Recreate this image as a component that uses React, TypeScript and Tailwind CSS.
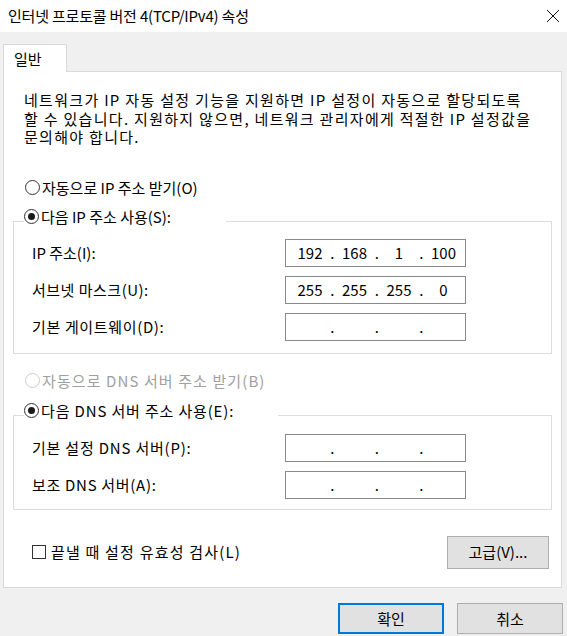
import React from 'react';

const FONT = { fontFamily: '"Noto Sans CJK KR", "Noto Sans", sans-serif' };

// Radio bullet, optionally checked or disabled
const Radio: React.FC<{ checked?: boolean; disabled?: boolean }> = ({ checked, disabled }) => (
  <span
    className={`w-[15px] h-[15px] rounded-full border flex items-center justify-center bg-white flex-shrink-0 ${
      disabled ? 'border-[#cccccc]' : 'border-[#333333]'
    }`}
  >
    {checked && <span className="w-[7px] h-[7px] rounded-full bg-[#1a1a1a]" />}
  </span>
);

const RadioRow: React.FC<{ label: string; checked?: boolean; disabled?: boolean; track?: string }> = ({
  label,
  checked,
  disabled,
  track = '',
}) => (
  <div className={`flex items-center gap-[2px] h-[18px] ${disabled ? 'text-[#a0a0a0]' : 'text-black'}`}>
    <Radio checked={checked} disabled={disabled} />
    <span className={track}>{label}</span>
  </div>
);

// IPv4 address box with 4 segments
const IpBox: React.FC<{ parts?: string[] }> = ({ parts = ['', '', '', ''] }) => (
  <div className="w-[181px] h-[28px] border border-[#8a8a8a] bg-white flex items-center pl-[4px]">
    {parts.map((p, i) => (
      <React.Fragment key={i}>
        <span className="w-[40px] text-center">{p}</span>
        {i < 3 && <span className="w-[4.5px] text-center">.</span>}
      </React.Fragment>
    ))}
  </div>
);

const FieldRow: React.FC<{ label: string; parts?: string[]; track?: string }> = ({ label, parts, track = '' }) => (
  <div className="flex items-center">
    <span className={`flex-1 ${track}`}>{label}</span>
    <IpBox parts={parts} />
  </div>
);

const App: React.FC = () => {
  return (
    <div className="w-[567px] h-[636px] bg-[#f0f0f0] flex flex-col text-[15px] leading-[18px] text-black" style={FONT}>
      {/* Title bar */}
      <div className="h-[32px] bg-white flex items-center justify-between pl-[8px] pr-[7px] flex-shrink-0">
        <span className="text-[15px] tracking-[-0.2px]">인터넷 프로토콜 버전 4(TCP/IPv4) 속성</span>
        <svg width="14" height="14" viewBox="0 0 14 14">
          <path d="M1 1 L13 13 M13 1 L1 13" stroke="#111" strokeWidth="1" fill="none" />
        </svg>
      </div>

      <div className="px-[3px] pt-[12px] flex flex-col">
        {/* Tab */}
        <div className="w-[64px] h-[28px] border border-b-0 border-[#d9d9d9] bg-white pl-[10px] flex items-center -mb-px relative">
          일반
        </div>

        {/* Tab panel */}
        <div className="w-[559px] h-[517px] border border-[#d9d9d9] bg-white flex flex-col">
          <p className="pl-[20px] pt-[19px] leading-[18.5px] tracking-[1.3px]">
            네트워크가 IP 자동 설정 기능을 지원하면 IP 설정이 자동으로 할당되도록
            <br />할 수 있습니다. 지원하지 않으면, 네트워크 관리자에게 적절한 IP 설정값을
            <br />문의해야 합니다.
          </p>

          <div className="pl-[21px] mt-[32px]">
            <RadioRow label="자동으로 IP 주소 받기(O)" />
          </div>

          <fieldset className="mx-[9px] mt-[11px] border border-[#dcdcdc] px-0 pb-[12px]">
            <legend className="ml-[10px] w-[202px] pb-[10px]">
              <RadioRow label="다음 IP 주소 사용(S):" checked />
            </legend>
            <div className="pl-[18px] pr-[85px] pt-[3px] flex flex-col gap-[9px]">
              <FieldRow label="IP 주소(I):" parts={['192', '168', '1', '100']} />
              <FieldRow label="서브넷 마스크(U):" parts={['255', '255', '255', '0']} track="tracking-[0.5px]" />
              <FieldRow label="기본 게이트웨이(D):" track="tracking-[0.65px]" />
            </div>
          </fieldset>

          <div className="pl-[21px] mt-[18px]">
            <RadioRow label="자동으로 DNS 서버 주소 받기(B)" disabled track="tracking-[1.1px]" />
          </div>

          <fieldset className="mx-[9px] mt-[12px] border border-[#dcdcdc] px-0 pb-[10px]">
            <legend className="ml-[10px] w-[254px] pb-[10px]">
              <RadioRow label="다음 DNS 서버 주소 사용(E):" checked track="tracking-[0.85px]" />
            </legend>
            <div className="pl-[18px] pr-[85px] pt-[4px] flex flex-col gap-[9px]">
              <FieldRow label="기본 설정 DNS 서버(P):" track="tracking-[0.8px]" />
              <FieldRow label="보조 DNS 서버(A):" track="tracking-[0.7px]" />
            </div>
          </fieldset>

          <div className="mt-[26px] pl-[28px] pr-[12px] flex items-center justify-between">
            <div className="flex items-center gap-[5px]">
              <span className="w-[14px] h-[14px] border border-[#333333] bg-white" />
              <span className="tracking-[1.2px]">끝낼 때 설정 유효성 검사(L)</span>
            </div>
            <button className="w-[102px] h-[33px] bg-[#e1e1e1] border border-[#adadad]">고급(V)...</button>
          </div>
        </div>

        {/* Dialog buttons */}
        <div className="mt-[15px] flex justify-end gap-[13px] pr-[1px]">
          <button className="w-[106px] h-[31px] bg-[#e1e1e1] border-2 border-[#0078d7]">확인</button>
          <button className="w-[106px] h-[31px] bg-[#e1e1e1] border border-[#adadad]">취소</button>
        </div>
      </div>
    </div>
  );
};

export default App;
